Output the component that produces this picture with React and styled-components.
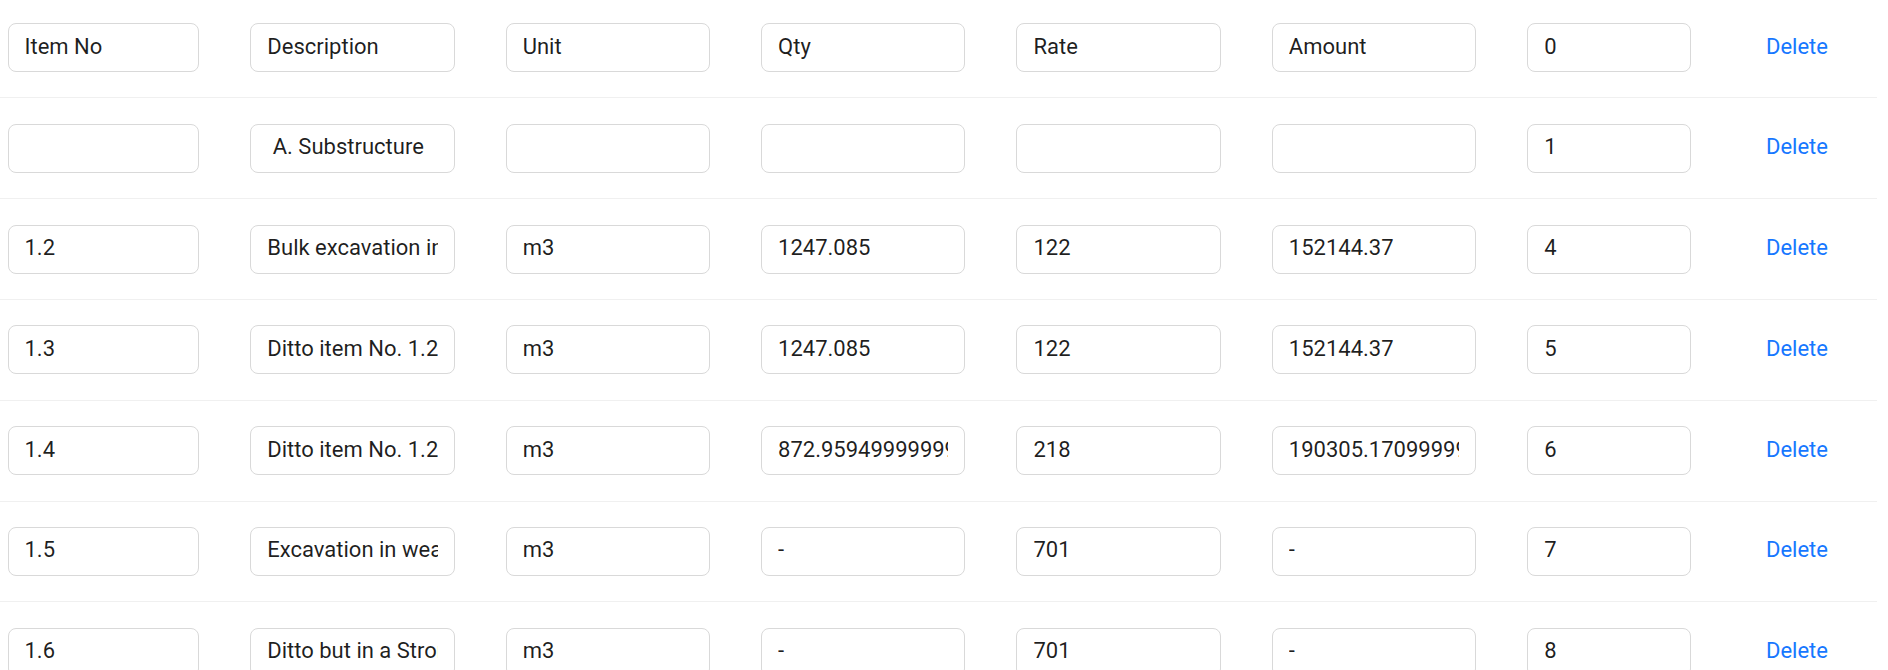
import React from "react";
import styled, { createGlobalStyle } from "styled-components";

const Global = createGlobalStyle`
  html, body { margin: 0; padding: 0; background: #ffffff; }
  body { font-family: Roboto, "Liberation Sans", Arial, sans-serif; overflow: hidden; }
`;

const Table = styled.div`
  width: 1877px;
  margin-top: -2.4px;
  display: flex;
  flex-direction: column;
`;

const Row = styled.div`
  display: grid;
  grid-template-columns: 191.8px repeat(5, 204.4px) 163.7px 1fr;
  column-gap: 51px;
  align-items: center;
  padding: 25.4px 0 25.4px 7.5px;
  border-bottom: 1px solid #f0f0f0;
`;

const Field = styled.input`
  box-sizing: border-box;
  width: 100%;
  height: 49px;
  margin: 0;
  padding: 0 16px 3px 16px;
  border: 1px solid #d9d9d9;
  border-radius: 8px;
  background: #ffffff;
  color: rgba(0, 0, 0, 0.88);
  font-family: Roboto, "Liberation Sans", Arial, sans-serif;
  font-size: 22px;
  outline: none;
`;

const DeleteButton = styled.button`
  justify-self: start;
  margin: 0 0 3px 24px;
  padding: 0;
  border: none;
  background: transparent;
  color: #1677ff;
  font-family: Roboto, "Liberation Sans", Arial, sans-serif;
  font-size: 22px;
  cursor: pointer;
`;

const rows = [
  ["Item No", "Description", "Unit", "Qty", "Rate", "Amount", "0"],
  ["", " A. Substructure", "", "", "", "", "1"],
  ["1.2", "Bulk excavation in ordinary soil to a depth of 1.5m", "m3", "1247.085", "122", "152144.37", "4"],
  ["1.3", "Ditto item No. 1.2 but from 1.5m to 3.0m depth", "m3", "1247.085", "122", "152144.37", "5"],
  ["1.4", "Ditto item No. 1.2 but from 3.0m to 4.5m depth", "m3", "872.9594999999999", "218", "190305.17099999998", "6"],
  ["1.5", "Excavation in weathered rock", "m3", "-", "701", "-", "7"],
  ["1.6", "Ditto but in a Strong rock", "m3", "-", "701", "-", "8"],
  ["1.7", "Cart away surplus excavated material", "m3", "-", "95", "-", "9"],
];

export default function App() {
  return (
    <>
      <Global />
      <Table>
        {rows.map((r, i) => (
          <Row key={i}>
            {r.map((v, j) => (
              <Field key={j} defaultValue={v} />
            ))}
            <DeleteButton type="button">Delete</DeleteButton>
          </Row>
        ))}
      </Table>
    </>
  );
}
